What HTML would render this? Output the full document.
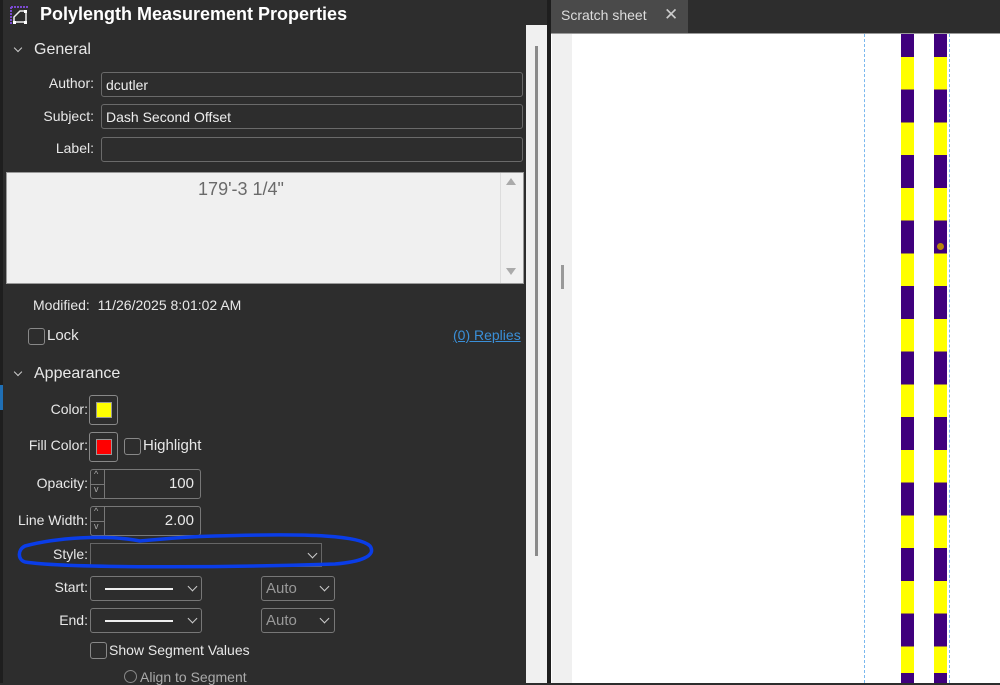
<!DOCTYPE html>
<html><head><meta charset="utf-8"><style>
*{box-sizing:border-box;margin:0;padding:0}
body{width:1000px;height:683px;overflow:hidden;background:#2d2d2d;font-family:"Liberation Sans",sans-serif;color:#e8e8e8;position:relative;font-size:14px}
.a{position:absolute}
.lbl{position:absolute;text-align:right;font-size:14px;color:#e8e8e8}
.inp{position:absolute;border:1px solid #6a6a6a;border-radius:3px;background:#2d2d2d;color:#eee;font-size:14px;padding-left:4px;line-height:24px}
.cb{position:absolute;width:17px;height:17px;border:1px solid #888;border-radius:3px;background:#2d2d2d}
.chev{position:absolute;width:7px;height:7px;border-right:1.3px solid #ccc;border-bottom:1.3px solid #ccc;transform:rotate(45deg)}
</style></head><body>
<div class="a" style="left:0;top:0;width:3px;height:683px;background:#1e1e1e"></div>
<div class="a" style="left:0;top:385px;width:3px;height:25px;background:#1f6fb5"></div>
<svg class="a" style="left:10px;top:5px" width="20" height="20" viewBox="0 0 20 20">
<path d="M1 2H18M1 2V19" stroke="#7a4ad0" stroke-width="2" stroke-dasharray="2 1"/>
<path d="M4 12L10 6H16V17H4Z" fill="none" stroke="#eee" stroke-width="1.5"/>
<rect x="3" y="16" width="3" height="3" fill="#fff"/><rect x="14" y="16" width="3" height="3" fill="#fff"/><rect x="14" y="5" width="3" height="3" fill="#fff"/>
</svg>
<div class="a" style="left:40px;top:4px;font-size:18px;font-weight:bold;color:#fff">Polylength Measurement Properties</div>
<div class="chev" style="left:15px;top:45px;width:6px;height:6px"></div>
<div class="a" style="left:34px;top:41px;font-size:16px">General</div>
<div class="lbl" style="left:20px;top:75px;width:74px">Author:</div>
<div class="inp" style="left:101px;top:72px;width:422px;height:25px">dcutler</div>
<div class="lbl" style="left:20px;top:108px;width:74px">Subject:</div>
<div class="inp" style="left:101px;top:104px;width:422px;height:25px">Dash Second Offset</div>
<div class="lbl" style="left:20px;top:140px;width:74px">Label:</div>
<div class="inp" style="left:101px;top:137px;width:422px;height:25px"></div>
<div class="a" style="left:6px;top:172px;width:518px;height:112px;background:#f0f0f0;border:1px solid #999"></div>
<div class="a" style="left:6px;top:179px;width:470px;text-align:center;color:#6a6a6a;font-size:18px">179'-3 1/4"</div>
<div class="a" style="left:500px;top:173px;width:23px;height:110px;background:#f0f0f0;border-left:1px solid #ddd"></div>
<div class="a" style="left:506px;top:178px;width:0;height:0;border-left:5px solid transparent;border-right:5px solid transparent;border-bottom:7px solid #aaa"></div>
<div class="a" style="left:506px;top:268px;width:0;height:0;border-left:5px solid transparent;border-right:5px solid transparent;border-top:7px solid #aaa"></div>
<div class="a" style="left:33px;top:297px;font-size:14px">Modified:&nbsp; 11/26/2025 8:01:02 AM</div>
<div class="cb" style="left:28px;top:328px"></div>
<div class="a" style="left:47px;top:327px;font-size:15px">Lock</div>
<div class="a" style="left:453px;top:327px;font-size:14px;color:#3a8fd8;text-decoration:underline">(0) Replies</div>
<div class="chev" style="left:15px;top:369px;width:6px;height:6px"></div>
<div class="a" style="left:34px;top:365px;font-size:16px">Appearance</div>
<div class="lbl" style="left:10px;top:401px;width:78px">Color:</div>
<div class="a" style="left:89px;top:395px;width:29px;height:30px;border:1px solid #888;border-radius:3px"><div style="margin:6px;width:16px;height:16px;background:#ff0;border:1px solid #999"></div></div>
<div class="lbl" style="left:10px;top:437px;width:78px">Fill Color:</div>
<div class="a" style="left:89px;top:432px;width:29px;height:30px;border:1px solid #888;border-radius:3px"><div style="margin:6px;width:16px;height:16px;background:#f00;border:1px solid #999"></div></div>
<div class="cb" style="left:124px;top:438px"></div>
<div class="a" style="left:143px;top:437px;font-size:15px">Highlight</div>
<div class="lbl" style="left:10px;top:475px;width:78px">Opacity:</div>
<div class="a" style="left:90px;top:469px;width:111px;height:30px;border:1px solid #777;border-radius:3px"><div class="a" style="left:13px;top:0;width:1px;height:28px;background:#777"></div><div class="a" style="left:0;top:14px;width:13px;height:1px;background:#777"></div><div class="a" style="right:6px;top:5px;font-size:15px">100</div><div class="a" style="left:3px;top:-1px;font-size:9px;color:#aaa">^</div><div class="a" style="left:3px;top:14px;font-size:9px;color:#aaa">v</div></div>
<div class="lbl" style="left:10px;top:512px;width:78px">Line Width:</div>
<div class="a" style="left:90px;top:506px;width:111px;height:30px;border:1px solid #777;border-radius:3px"><div class="a" style="left:13px;top:0;width:1px;height:28px;background:#777"></div><div class="a" style="left:0;top:14px;width:13px;height:1px;background:#777"></div><div class="a" style="right:6px;top:5px;font-size:15px">2.00</div><div class="a" style="left:3px;top:-1px;font-size:9px;color:#aaa">^</div><div class="a" style="left:3px;top:14px;font-size:9px;color:#aaa">v</div></div>
<div class="lbl" style="left:10px;top:546px;width:78px">Style:</div>
<div class="a" style="left:90px;top:543px;width:232px;height:24px;border:1px solid #666"></div>
<div class="chev" style="left:309px;top:550px"></div>
<svg class="a" style="left:15px;top:528px" width="360" height="46" viewBox="0 0 360 46"><path d="M125 13C90 6 40 10 10 18C2 22 3 32 10 34C50 40 200 40 320 36C345 34 362 28 355 18C345 8 300 5 200 8C160 9 140 12 125 13Z" fill="none" stroke="#0a3de8" stroke-width="3.5"/></svg>
<div class="lbl" style="left:10px;top:579px;width:78px">Start:</div>
<div class="a" style="left:90px;top:576px;width:112px;height:25px;border:1px solid #777;border-radius:3px"><div class="a" style="left:14px;top:11px;width:68px;height:2px;background:#eee"></div></div>
<div class="chev" style="left:189px;top:583px"></div>
<div class="a" style="left:261px;top:576px;width:74px;height:25px;border:1px solid #777;border-radius:3px;color:#999;font-size:15px;padding:3px 4px">Auto</div>
<div class="chev" style="left:321px;top:583px"></div>
<div class="lbl" style="left:10px;top:612px;width:78px">End:</div>
<div class="a" style="left:90px;top:608px;width:112px;height:25px;border:1px solid #777;border-radius:3px"><div class="a" style="left:14px;top:11px;width:68px;height:2px;background:#eee"></div></div>
<div class="chev" style="left:189px;top:615px"></div>
<div class="a" style="left:261px;top:608px;width:74px;height:25px;border:1px solid #777;border-radius:3px;color:#999;font-size:15px;padding:3px 4px">Auto</div>
<div class="chev" style="left:321px;top:615px"></div>
<div class="cb" style="left:90px;top:642px"></div>
<div class="a" style="left:109px;top:642px;font-size:14px">Show Segment Values</div>
<div class="a" style="left:124px;top:670px;width:13px;height:13px;border:1px solid #888;border-radius:50%"></div>
<div class="a" style="left:140px;top:669px;font-size:14px;color:#aaa">Align to Segment</div>
<div class="a" style="left:526px;top:25px;width:21px;height:658px;background:#f0f0f0"></div>
<div class="a" style="left:535px;top:46px;width:3px;height:510px;background:#8a8a8a"></div>
<div class="a" style="left:547px;top:0;width:4px;height:683px;background:#1e1e1e"></div>
<div class="a" style="left:551px;top:0;width:449px;height:33px;background:#2d2d2d"></div>
<div class="a" style="left:551px;top:0;width:137px;height:33px;background:#4a4a4a"></div>
<div class="a" style="left:561px;top:7px;font-size:14px;color:#ddd">Scratch sheet</div>
<div class="a" style="left:664px;top:5px;font-size:17px;color:#ccc">✕</div>
<div class="a" style="left:551px;top:33px;width:449px;height:650px;background:#fff;border-top:1px solid #999"></div>
<div class="a" style="left:552px;top:34px;width:20px;height:649px;background:#f0f0f0"></div>
<div class="a" style="left:561px;top:265px;width:3px;height:24px;background:#999"></div>
<div class="a" style="left:864px;top:34px;width:0;height:649px;border-left:1px dashed #7ab8ee"></div>
<div class="a" style="left:949px;top:34px;width:0;height:649px;border-left:1px dashed #7ab8ee"></div>
<div class="a" style="left:901px;top:34px;width:13px;height:649px;background:repeating-linear-gradient(#3f007d 0 33px,#ff0 33px 65.5px);background-position:0 -10px"></div>
<div class="a" style="left:934px;top:34px;width:13px;height:649px;background:repeating-linear-gradient(#3f007d 0 33px,#ff0 33px 65.5px);background-position:0 -10px"></div>
<div class="a" style="left:937px;top:243px;width:7px;height:7px;border-radius:50%;background:#b8860b"></div>
</body></html>
